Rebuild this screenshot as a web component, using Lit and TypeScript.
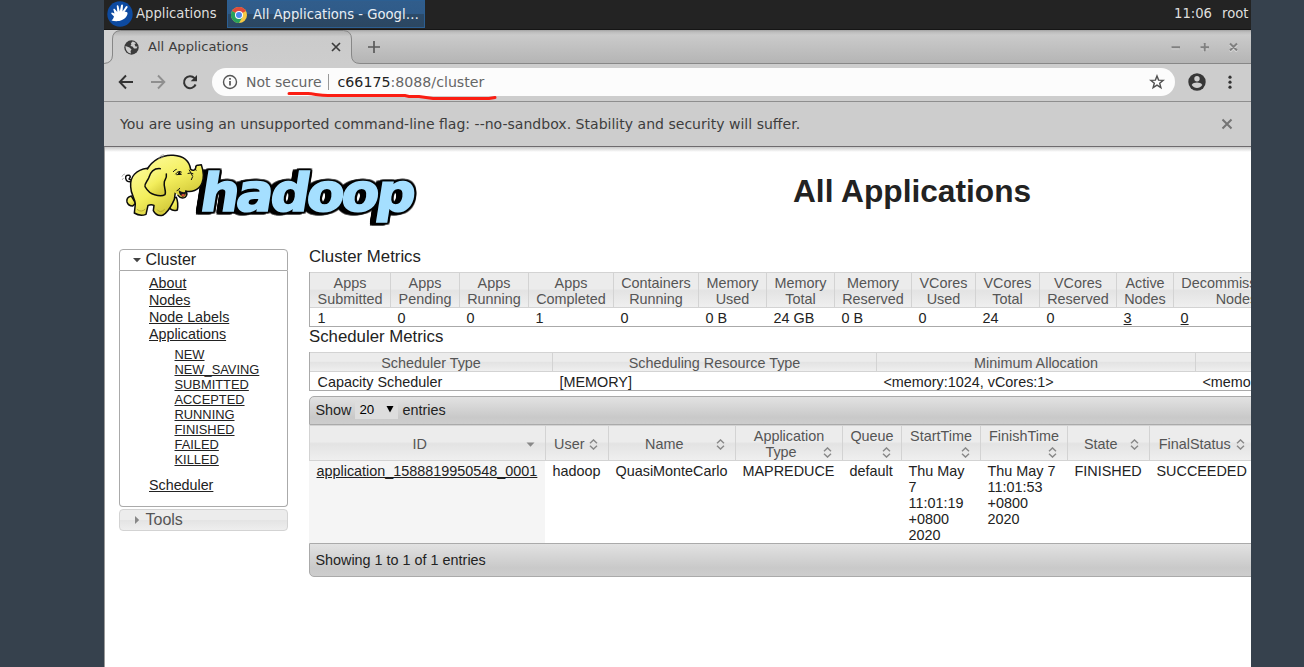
import { LitElement, html, css, svg } from "lit";
import { customElement } from "lit/decorators.js";

const clusterMetrics: [string, string, string, boolean?][] = [
  ["Apps", "Submitted", "1"],
  ["Apps", "Pending", "0"],
  ["Apps", "Running", "0"],
  ["Apps", "Completed", "1"],
  ["Containers", "Running", "0"],
  ["Memory", "Used", "0 B"],
  ["Memory", "Total", "24 GB"],
  ["Memory", "Reserved", "0 B"],
  ["VCores", "Used", "0"],
  ["VCores", "Total", "24"],
  ["VCores", "Reserved", "0"],
  ["Active", "Nodes", "3", true],
  ["Decommissioned", "Nodes", "0", true],
];

const schedulerMetrics = [
  ["Scheduler Type", "Capacity Scheduler"],
  ["Scheduling Resource Type", "[MEMORY]"],
  ["Minimum Allocation", "<memory:1024, vCores:1>"],
  ["", "<memory:8192, vCores:4>"],
];

const appColumns: { head: string[]; cell: string[] }[] = [
  { head: ["ID"], cell: ["application_1588819950548_0001"] },
  { head: ["User"], cell: ["hadoop"] },
  { head: ["Name"], cell: ["QuasiMonteCarlo"] },
  { head: ["Application", "Type"], cell: ["MAPREDUCE"] },
  { head: ["Queue", ""], cell: ["default"] },
  { head: ["StartTime", ""], cell: ["Thu May", "7", "11:01:19", "+0800", "2020"] },
  { head: ["FinishTime", ""], cell: ["Thu May 7", "11:01:53", "+0800", "2020"] },
  { head: ["State"], cell: ["FINISHED"] },
  { head: ["FinalStatus"], cell: ["SUCCEEDED"] },
];

const states = ["NEW", "NEW_SAVING", "SUBMITTED", "ACCEPTED", "RUNNING", "FINISHED", "FAILED", "KILLED"];

@customElement("desktop-panel")
class DesktopPanel extends LitElement {
  static styles = css`
    :host {
      display: flex;
      height: 30px;
      box-sizing: border-box;
      border-bottom: 1px solid #151515;
      background: #232323;
      color: #dedede;
      font: 13.2px/27px "DejaVu Sans", sans-serif;
      white-space: nowrap;
    }
    .mouse { width: 26px; height: 26px; margin: 1px 3px 0 3px; flex: none; }
    .menu { width: 91px; }
    .task {
      display: flex;
      box-sizing: border-box;
      width: 198px;
      height: 28px;
      border: 1px solid #2c5f92;
      background: linear-gradient(#315d8b, #2f5b89 48%, #2b4a69 52%, #2c4761);
      color: #e8eef4;
      padding: 0 0 0 3px;
    }
    .chrome { width: 16px; height: 16px; margin: 6px 6px 0 0; }
    .spacer { flex: 1; }
    .clock { width: 48px; }
    .user { width: 29px; }
  `;
  render() {
    return html`
      <svg class="mouse" viewBox="0 0 26 26">
        <circle cx="13" cy="13" r="12.7" fill="#0d4aa0" />
        <path d="M4.500 19.500C8 20.500 12 20.500 15 19C18.500 17.500 20 15 20.500 13C21 11 19 10.500 17.500 11L20.500 6.500C21 5 19.500 4.500 18.800 5.500L15.500 10.500L16 4.500C16 3.200 14.500 3 14 4.500L12.800 10.500L11.500 5C11 3.700 9.500 4 9.800 5.500L10.300 11L7.800 8C7 7.200 6 8 6.500 9L7.500 12.500L5 11.500C4.200 11.500 4 12.500 4.800 13.200L7 15.500C6.500 17.500 5.500 18.500 4.500 19.500Z" fill="#fff" />
      </svg>
      <span class="menu">Applications</span>
      <div class="task">
        <svg class="chrome" viewBox="0 0 16 16">
          <circle cx="8" cy="8" r="8" fill="#f6c944" />
          <path d="M8 8L1.070 4A8 8 0 0 1 14.930 4Z" fill="#df4b3b" />
          <path d="M1.070 4A8 8 0 0 0 8 16L11.500 10L8 8Z" fill="#28a15c" />
          <circle cx="8" cy="8" r="4" fill="#fff" />
          <circle cx="8" cy="8" r="3" fill="#4b87ec" />
        </svg>
        <span>All Applications - Googl…</span>
      </div>
      <span class="spacer"></span>
      <span class="clock">11:06</span>
      <span class="user">root</span>
    `;
  }
}

@customElement("browser-chrome")
class BrowserChrome extends LitElement {
  static styles = css`
    :host { display: block; font-family: "DejaVu Sans", sans-serif; color: #3d3d3d; white-space: nowrap; }
    svg { display: block; flex: none; }
    .strip { display: grid; height: 34px; background: linear-gradient(#a4a4a4, #bdbdbd 2px, #cbcbcb 5px, #c5c5c5 12px, #b4b4b4); }
    .strip > * { grid-area: 1 / 1; }
    .tabs { display: flex; height: 34px; align-items: center; font-size: 13.1px; z-index: 1; }
    .globe { margin: 0 9px 0 20px; }
    .label { width: 182px; padding-bottom: 2px; }
    .plus { margin-left: 26px; }
    .gap { flex: 1; }
    .wm { margin-right: 12px; }
    .toolbar { display: flex; align-items: center; height: 37px; box-sizing: content-box; background: #cdcdcd; border-bottom: 1px solid #8e8e8e; }
    .toolbar > * { margin-bottom: 2px; }
    .nav { margin-left: 14px; }
    .nav + .nav { margin-left: 16px; }
    .omni { display: flex; align-items: center; width: 963px; height: 28px; margin-left: 14px; border-radius: 14px; background: #fcfcfc; font-size: 14px; color: #666; box-sizing: border-box; padding: 0 10px; }
    .info { margin-right: 8px; }
    .bar { width: 1px; height: 16px; margin: 0 9px 0 6px; background: #999; }
    .host { color: #222; }
    .url { flex: 1; font-size: 14.2px; }
    .avatar { margin-left: 13px; }
    .dots { margin-left: 22px; }
    .notice { display: flex; align-items: center; height: 44px; padding: 0 18px 0 16px; background: #cdcdcd; border-bottom: 1px solid #6e6b6e; font-size: 14.06px; }
    .notice span { flex: 1; }
  `;
  render() {
    return html`
      <div class="strip">
        <svg width="1147" height="34" viewBox="0 0 1147 34">
          <defs>
            <linearGradient id="tab" x1="0" y1="0" x2="0" y2="1">
              <stop offset="0" stop-color="#acacac" /><stop offset=".18" stop-color="#cbcbcb" /><stop offset="1" stop-color="#cdcdcd" />
            </linearGradient>
          </defs>
          <path d="M0 0H16Q8 1 8 9V26Q8 33 0 33Z" fill="#d2d2d2" />
          <path d="M0 33.500Q8.500 33 8.500 25V9Q8.500 1 16.500 .5H239.500Q247.500 1 247.500 9V25Q247.500 33.500 256 33.500V34H0Z" fill="url(#tab)" />
          <path d="M0 33.500Q8.500 33 8.500 25V9Q8.500 1 16.500 .5H239.500Q247.500 1 247.500 9V25Q247.500 33.500 256 33.500H1147" fill="none" stroke="#878787" />
        </svg>
        <div class="tabs">
          <svg class="globe" width="15" height="15" viewBox="0 0 15 15">
            <circle cx="7.500" cy="7.500" r="7.200" fill="#3b3b3b" />
            <path d="M1.500 6L5.500 7.500L7.500 9.500L6.500 11L7 13.500C3.500 13 1.500 10 1.500 6ZM8.500 1.500C7 3 6.500 3.500 7.500 4.500C6 5 6.500 6.500 8.500 6.500L10 8.500L12.500 8.500L13.500 6.500L11.500 6.500L10.500 4L12 3.500C11.500 2.500 10 1.700 8.500 1.500Z" fill="#cdcdcd" />
          </svg>
          <span class="label">All Applications</span>
          <svg width="12" height="12" viewBox="0 0 12 12"><path d="M2 2L10 10M10 2L2 10" stroke="#3d3d3d" stroke-width="1.700" /></svg>
          <svg class="plus" width="12" height="12" viewBox="0 0 12 12"><path d="M6 0V12M0 6H12" stroke="#5a5a5a" stroke-width="1.700" /></svg>
          <span class="gap"></span>
          <svg class="wm" width="70" height="12" viewBox="0 0 70 12">
            <path d="M3 7.500H11M32 7.500H40M36 3.500V11.500M61.500 4L68.500 11M68.500 4L61.500 11" transform="translate(-.5 -.5)" fill="none" stroke="#ddd" stroke-width="2.400" />
            <path d="M2.500 6.200H11M31.500 6.200H40M35.700 2V10.500M61 2.500L68 9.500M68 2.500L61 9.500" fill="none" stroke="#808080" stroke-width="2" />
          </svg>
        </div>
      </div>
      <div class="toolbar">
        <svg class="nav" width="16" height="16" viewBox="0 0 16 16"><path d="M15 8H2M8 1.500L1.700 8L8 14.500" fill="none" stroke="#333" stroke-width="1.900" /></svg>
        <svg class="nav" width="16" height="16" viewBox="0 0 16 16"><path d="M1 8H14M8 1.500L14.300 8L8 14.500" fill="none" stroke="#8f8f8f" stroke-width="1.900" /></svg>
        <svg class="nav" width="16" height="16" viewBox="0 0 16 16"><path d="M13.600 10.500A6 6 0 1 1 12.500 4.200" fill="none" stroke="#333" stroke-width="2" /><path d="M15 1V7.300H8.700Z" fill="#333" /></svg>
        <div class="omni">
          <svg class="info" width="16" height="16" viewBox="0 0 16 16"><circle cx="8" cy="8" r="6.500" fill="none" stroke="#555" stroke-width="1.400" /><path d="M8 7V11.500M8 4V5.700" stroke="#555" stroke-width="1.700" /></svg>
          <span>Not secure</span><i class="bar"></i>
          <span class="url"><span class="host">c66175</span>:8088/cluster</span>
          <svg width="16" height="16" viewBox="0 0 16 16"><path d="M8 2L9.600 6.100L14.200 6.400L10.700 9.200L11.900 13.700L8 11.200L4.100 13.700L5.300 9.200L1.800 6.400L6.400 6.100Z" fill="none" stroke="#505050" stroke-width="1.400" /></svg>
        </div>
        <svg class="avatar" width="18" height="18" viewBox="0 0 18 18"><circle cx="9" cy="9" r="8.700" fill="#373737" /><circle cx="9" cy="5.700" r="2.700" fill="#cdcdcd" /><path d="M3.700 12C4.500 10.300 7 9.600 9 9.600S13.500 10.300 14.300 12C13 13.900 11 15 9 15S5 13.900 3.700 12Z" fill="#cdcdcd" /></svg>
        <svg class="dots" width="4" height="16" viewBox="0 0 4 16"><circle cx="2" cy="3.200" r="1.600" fill="#333" /><circle cx="2" cy="8.200" r="1.600" fill="#333" /><circle cx="2" cy="13.200" r="1.600" fill="#333" /></svg>
      </div>
      <div class="notice">
        <span>You are using an unsupported command-line flag: --no-sandbox. Stability and security will suffer.</span>
        <svg width="12" height="12" viewBox="0 0 12 12"><path d="M1.500 1.500L10.500 10.500M10.500 1.500L1.500 10.500" stroke="#747474" stroke-width="2" /></svg>
      </div>
    `;
  }
}

@customElement("hadoop-logo")
class HadoopLogo extends LitElement {
  static styles = css`
    :host { display: block; width: 320px; height: 89px; }
    svg { display: block; }
    .word { font: bold 158px "DejaVu Sans", sans-serif; letter-spacing: -9px; }
    .outline { filter: drop-shadow(5px 0 0 #000) drop-shadow(-6px 0 0 #000) drop-shadow(0 5px 0 #000) drop-shadow(0 -5px 0 #000) drop-shadow(-12px 3px 0 #000); }
  `;
  render() {
    return html`
      <svg width="320" height="89" viewBox="0 3 960 267">
        <defs>
          <linearGradient id="skin" x1="0" y1="0" x2=".6" y2="1"><stop offset="0" stop-color="#fdfb9a" /><stop offset=".6" stop-color="#f3ee5c" /><stop offset="1" stop-color="#d5cc3c" /></linearGradient>
        </defs>
        <g class="outline">
          <text class="word" transform="translate(265 194) skewX(-9) scale(1.045 1)" x="0" y="0" fill="#a5dfff" stroke="#a5dfff" stroke-width="5">hadoop</text>
        </g>
        <g fill="url(#skin)" stroke="#0c0c0c" stroke-width="4.500" stroke-linejoin="round" stroke-linecap="round">
          <path d="M180 160L180 188Q190 197 202 192Q206 172 199 154Z" />
          <path d="M64 150Q48 154 51 168Q55 180 68 180L77 172Z" />
          <path d="M66 106Q50 111 47 97Q46 85 58 88Q64 92 57 99M57 99Q63 105 73 98" fill="none" />
          <path d="M112 67C78 72 60 92 62 122C62 145 76 158 76 174L73 201Q90 212 108 205L114 178Q124 174 132 178L130 194Q139 212 158 208L166 202Q181 188 193 160L197 132L165 79Z" />
          <path d="M108 79C121 50 154 25 190 28C218 30 238 44 242 70C247 75 256 74 257 66Q257 57 264 58L274 56Q285 88 276 111C267 134 242 140 227 135Q235 147 225 154Q213 160 204 148C195 137 188 137 171 134L149 81Z" stroke="none" />
          <path d="M112 69C126 46 154 25 190 28C218 30 238 44 242 70C247 75 256 74 257 66Q257 57 264 58L274 56Q285 88 276 111C267 134 242 140 227 135Q235 147 225 154Q213 160 204 148" fill="none" />
          <path d="M151 68C128 66 120 82 116 96C112 106 103 112 105 122C112 134 122 144 134 146C146 150 160 149 165 146C170 137 160 122 163 107C166 99 171 94 169 84" />
        </g>
        <path d="M206 133Q222 143 228 136Q229 149 219 153Q207 148 206 133Z" fill="#171717" />
        <path d="M213 148Q219 140 226 147Q220 156 213 148Z" fill="#d55136" />
        <g fill="none" stroke="#111" stroke-width="3" stroke-linecap="round">
          <path d="M197 84Q205 72 214 78M200 86L214 85M190 77Q194 71 199 70M234 82Q242 79 249 83M238 72L248 91M247 94L244 101M257 63Q253 69 258 73M209 127Q207 132 201 134" />
          <path d="M147 38Q147 29 160 26M152 38Q154 33 160 31M36 91Q38 85 44 84M37 101L40 97" stroke="#888" stroke-width="2" />
        </g>
        <ellipse cx="208" cy="82" rx="4" ry="5" fill="#111" />
        <path d="M142 191Q150 203 164 190M81 190Q94 201 106 189" fill="none" stroke="#b5a934" stroke-width="3" />
      </svg>
    `;
  }
}

@customElement("side-nav")
class SideNav extends LitElement {
  static styles = css`
    :host { display: block; width: 169px; color: #222; }
    .head { display: flex; align-items: center; gap: 5px; box-sizing: border-box; height: 22px; padding-left: 12.500px; border: 1px solid #aaa; border-radius: 4px 4px 0 0; font-size: 16px; }
    .closed { margin-top: 2px; border-color: #d3d3d3; border-radius: 4px; color: #555; background: linear-gradient(#ececec 48%, #e4e4e4 52%, #eee); }
    .body { box-sizing: border-box; height: 236px; border: 1px solid #aaa; border-top: 0; border-radius: 0 0 4px 4px; padding: 4px 0 0 29px; font-size: 14.3px; line-height: 17px; }
    .body a, .states a { display: block; text-decoration: underline; }
    .states { padding: 4px 0 10px 25.5px; font-size: 12.87px; line-height: 15px; }
  `;
  render() {
    return html`
      <div class="head"><svg width="8" height="8"><path d="M0 2H8L4 6.200Z" fill="#444" /></svg>Cluster</div>
      <div class="body">
        <a>About</a><a>Nodes</a><a>Node Labels</a><a>Applications</a>
        <div class="states">${states.map((s) => html`<a>${s}</a>`)}</div>
        <a>Scheduler</a>
      </div>
      <div class="head closed"><svg width="8" height="8"><path d="M2 0V8L6.200 4Z" fill="#888" /></svg>Tools</div>
    `;
  }
}

@customElement("cluster-report")
class ClusterReport extends LitElement {
  static styles = css`
    :host { display: block; width: 1100px; font-size: 14.4px; line-height: 16px; color: #222; white-space: nowrap; }
    h3 { margin: 0; font-size: 16.8px; font-weight: 400; line-height: 20px; padding-bottom: 5px; }
    h3:first-child { padding: 1px 0 5px; }
    .grid { display: grid; border-left: 1px solid #aaa; border-bottom: 1px solid #aaa; }
    .cluster { grid-template-columns: 81px 69px 69px 85px 85px 68px 68px 77px 64px 64px 77px 57px 126px; }
    .sched { grid-template-columns: 243px 324px 319px 324px; }
    .th { box-sizing: border-box; text-align: center; color: #555; border: 1px solid #d3d3d3; border-left: 0; background: linear-gradient(#ececec 46%, #e3e3e3 52%, #efefef); }
    .cluster .th { height: 36px; padding-top: 2px; }
    .cluster .td { height: 18px; line-height: 20px; padding-left: 6.6px; }
    .sched .th { height: 20px; line-height: 20px; }
    .sched .td { height: 18px; line-height: 20px; padding-left: 6.400px; }
    .grid .td.first { padding-left: 7.500px; }
    .link { text-decoration: underline; }
    .bar { display: flex; box-sizing: border-box; align-items: center; border: 1px solid #aaa; padding-left: 5.400px; background: linear-gradient(#e2e2e2, #c9c9c9 75%, #cdcdcd); }
    .top { height: 29px; margin-top: 5px; padding-bottom: 2px; border-radius: 5px 0 0 0; }
    .bottom { height: 34px; border-radius: 0 0 0 5px; }
    .select { display: flex; align-items: center; box-sizing: border-box; width: 43px; height: 17px; margin: 1px 4px 0; padding: 0 4px; background: #ddd; color: #000; font-size: 13.33px; }
    .select svg { margin: 0 0 2px auto; }
    .apps { display: grid; grid-template-columns: 237px 63px 127px 107px 59px 79px 87px 82px 106px; }
    .apps .th { display: grid; height: 36px; align-items: center; }
    .apps .th:first-child { border-left: 1px solid #d3d3d3; }
    .label, .icon { grid-area: 1 / 1; }
    .label { padding-top: 1px; }
    .one { padding-right: 15.500px; }
    .second { display: block; height: 16px; padding-right: 16px; }
    .icon { display: block; justify-self: end; margin: 2px 10px 0 0; }
    .low { align-self: end; margin-bottom: 2px; }
    .row { height: 82px; padding: 2px 0 0 6.500px; box-sizing: border-box; }
    .sorted { background: #f5f5f5; padding-left: 7.500px; margin-right: 1px; }
    .line { display: block; }
  `;
  render() {
    return html`
      <h3>Cluster Metrics</h3>
      <div class="grid cluster">
        ${clusterMetrics.map(([a, b]) => html`<div class="th">${a}<br />${b}</div>`)}
        ${clusterMetrics.map(([, , v, link], i) => html`<div class="td ${i ? "" : "first"}"><span class=${link ? "link" : ""}>${v}</span></div>`)}
      </div>
      <h3>Scheduler Metrics</h3>
      <div class="grid sched">
        ${schedulerMetrics.map(([h]) => html`<div class="th">${h}</div>`)}
        ${schedulerMetrics.map(([, v], i) => html`<div class="td ${i ? "" : "first"}">${v}</div>`)}
      </div>
      <div class="bar top">Show<span class="select">20<svg width="8" height="7"><path d="M.5 0H7.500L4 6.500Z" fill="#000" /></svg></span>entries</div>
      <div class="apps">
        ${appColumns.map(({ head }, i) => html`
          <div class="th">
            <span class="label ${head.length === 1 ? "one" : ""}">${head[0]}${head.length > 1 ? html`<span class="second">${head[1]}</span>` : ""}</span>
            <svg class="icon ${head.length > 1 ? "low" : ""}" width="9" height="11" viewBox="0 0 9 11">
              ${i === 0
                ? svg`<path d="M.5 3.500H8.500L4.500 7.700Z" fill="#888" />`
                : svg`<path d="M1 4.200L4.500 .9L8 4.200M1 6.800L4.500 10.100L8 6.800" fill="none" stroke="#888" stroke-width="1.400" />`}
            </svg>
          </div>`)}
        ${appColumns.map(({ cell }, i) => html`<div class="row ${i === 0 ? "sorted" : ""}">${cell.map((l) => html`<span class="line"><span class=${i === 0 ? "link" : ""}>${l}</span></span>`)}</div>`)}
      </div>
      <div class="bar bottom">Showing 1 to 1 of 1 entries</div>
    `;
  }
}

@customElement("app-root")
class AppRoot extends LitElement {
  static styles = css`
    :host { display: block; height: 667px; box-sizing: border-box; padding: 0 53px 0 104px; background: #36414d; overflow: hidden; }
    .window { position: relative; display: flex; flex-direction: column; height: 667px; overflow: hidden; }
    .page { flex: 1; box-sizing: border-box; border-left: 1px solid #999; background: linear-gradient(#c9c9c9, #fff 5px); overflow: hidden; font-family: "Liberation Sans", Arial, sans-serif; color: #222; }
    .banner { display: flex; height: 89px; }
    .banner hadoop-logo { flex: none; margin-left: 5px; }
    h1 { flex: none; margin: 25px 0 0 363px; font-size: 31.68px; line-height: 38px; white-space: nowrap; }
    .content { display: flex; }
    side-nav { flex: none; margin: 13px 21px 0 14px; }
    cluster-report { flex: none; margin-top: 10px; }
    .mark { position: absolute; left: 180px; top: 88px; }
  `;
  render() {
    return html`
      <div class="window">
        <desktop-panel></desktop-panel>
        <browser-chrome></browser-chrome>
        <div class="page">
          <div class="banner"><hadoop-logo></hadoop-logo><h1>All Applications</h1></div>
          <div class="content"><side-nav></side-nav><cluster-report></cluster-report></div>
        </div>
        <svg class="mark" width="220" height="14" viewBox="0 0 220 14">
          <path d="M5 5.500H24C31 6 36 7.500 44 7.500H121L125 8.500H135L149 10.500H205L211 9.500" fill="none" stroke="#fb1d12" stroke-width="3" stroke-linecap="round" />
        </svg>
      </div>
    `;
  }
}
